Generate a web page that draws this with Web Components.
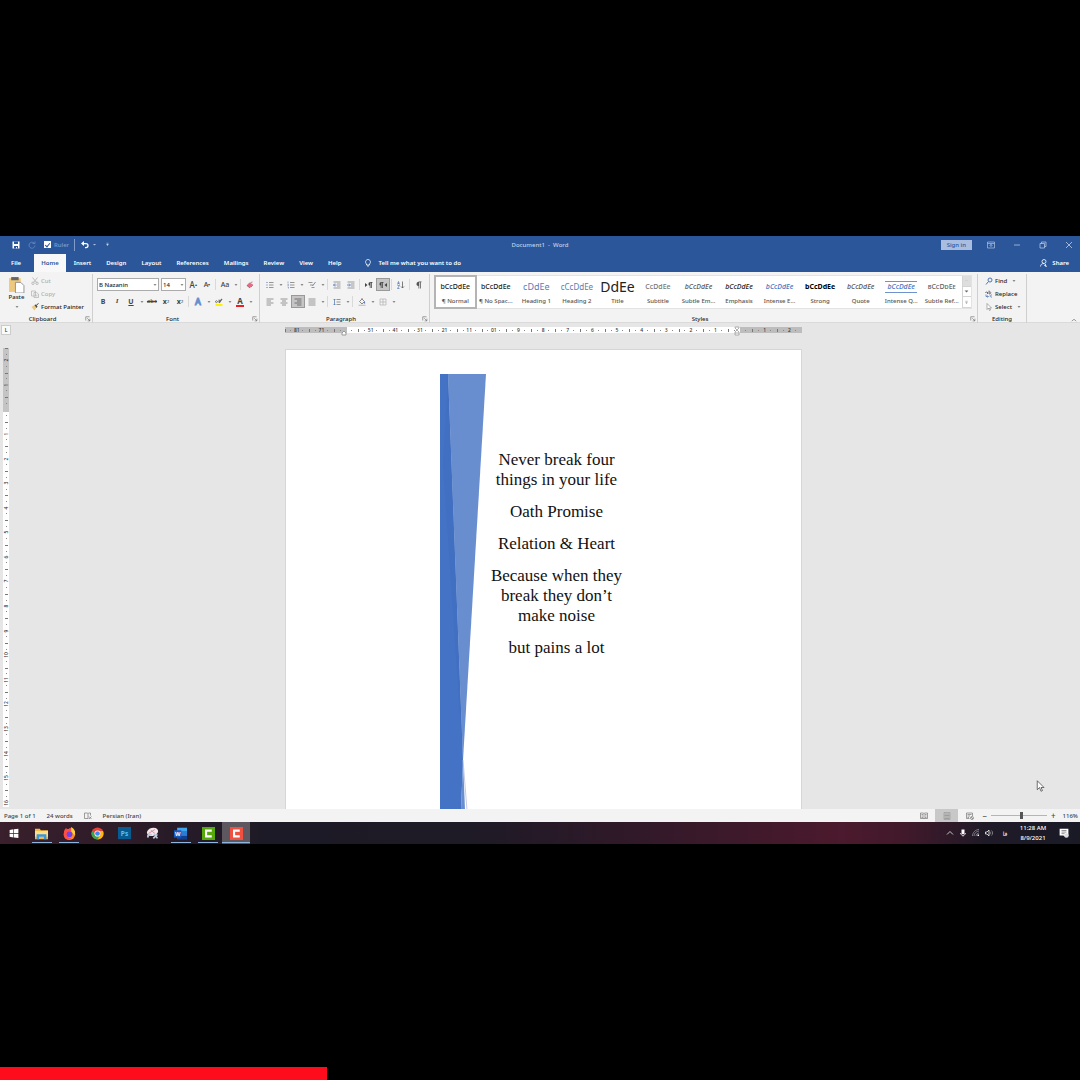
<!DOCTYPE html>
<html lang="en">
<head>
<meta charset="utf-8">
<title>Document1 - Word</title>
<style>
    body {
        margin: 0;
        background: #000;
        font-family: "Noto Sans", "Open Sans", sans-serif;
        font-size: 6px;
        font-weight: 500;
        color: #262626;
    }
</style>
</head>
<body>
<video-frame played="30.3">
    <word-window></word-window>
    <task-bar></task-bar>
</video-frame>

<script>
const base = `
    :host, * { box-sizing: border-box; }
    button, input, select {
        font: inherit;
        color: inherit;
        margin: 0;
        padding: 0;
        border: 0;
        background: none;
    }
    button { display: flex; align-items: center; white-space: nowrap; }
`;

const line = (d, color = '#555', width = 1) =>
    `<path d="${d}" fill="none" stroke="${color}" stroke-width="${width}"/>`;
const fill = (d, color) => `<path d="${d}" fill="${color}"/>`;

// Every icon is drawn on a 16 x 16 grid
const icons = {
    arrow: fill('M2 5h12l-6 6z', '#666'),
    arrowLight: fill('M3 6h10l-5 5z', '#a9bfe3'),
    save: fill('M1 1h14v14H1z', '#fff') + fill('M4 1h8v5H4zM4 10h8v5h-2v-3H8v3H4z', '#2b579a'),
    redo: line('M12 4a6 6 0 1 0 2 5M9 5h5V1', '#6c8dc3', 1.5),
    undo: line('M3 5h7a4 4 0 0 1 0 8H8', '#fff', 2.5) + fill('M0 5l6-5v10z', '#fff'),
    customise: line('M5 4h6', '#fff', 1.5) + fill('M4 7h8l-4 5z', '#fff'),
    display: line('M1 2h14v12H1zM1 5h14M8 12V7M5 9l3-2 3 2', '#b9cae6', 1.3),
    minimise: line('M2 8h12', '#b9cae6', 1.5),
    restore: line('M2 5h9v9H2zM5 5V2h9v9h-3', '#b9cae6', 1.5),
    close: line('M2 2l12 12M14 2L2 14', '#c9d6ec', 1.5),
    person: line('M8 1a4 4 0 0 1 0 8a4 4 0 0 1 0-8M1 15c0-4 3-6 7-6M11 10v5M8 12l6 3', '#fff', 1.6),
    bulb: line('M5 10C1 6 4 1 8 1s7 5 3 9v2H5zM6 14h4', '#fff', 1.6),
    paste: fill('M1 2h11v13H1z', '#edc87e') + fill('M3 1h7v3H3z', '#666') +
        '<path d="M7 6h5l3 3v7H7z" fill="#fff" stroke="#888" stroke-width=".8"/>',
    cut: line('M3 1l8 10M13 1L5 11M4 10a2 2 0 1 1 0 5a2 2 0 1 1 0-5M12 10a2 2 0 1 1 0 5a2 2 0 1 1 0-5', '#b4b4b4', 1.7),
    copy: '<path d="M1 2h8v10H1zM6 5h5l4 3v7H6z" fill="#f3f3f3" stroke="#b4b4b4" stroke-width="1.5"/>' + line('M8 10h5M8 12h5', '#b4b4b4'),
    painter: fill('M1 8l6-4 4 5-4 6z', '#edc87e') + fill('M7 4l3-1 3 4-2 3z', '#444') + line('M11 4l4-3', '#444', 2),
    highlight: fill('M1 12h14v4H1z', '#fff200') + line('M1 8c0-4 4-3 4 0c-1 2-4 1-4 0M8 3v6c3 1 4-3 0-4', '#444', 1.3) + line('M8 9l6-7', '#666', 2.5),
    eraser: fill('M1 9l6-6 7 4-6 7z', '#e36c83') + line('M2 9l6 5M9 3l4-1M10 12l4-4', '#9a5068', 1.4),
    bullets: fill('M1 2h2v2H1zM1 7h2v2H1zM1 12h2v2H1z', '#4d73b5') + line('M6 3h9M6 8h9M6 13h9', '#777', 1.5),
    numbering: line('M2 1v4M1 7h2v2H1M1 12h2v3', '#4d73b5') + line('M6 3h9M6 8h9M6 13h9', '#777', 1.5),
    multilevel: line('M1 3h8M4 8h6M7 13h6', '#777', 1.5) + line('M9 10l6-8', '#4d73b5', 1.6),
    outdent: line('M1 2h14M8 6h7M8 10h7M1 14h14', '#777', 1.4) + line('M7 8H1M4 5L1 8l3 3', '#4d73b5', 1.6),
    indent: line('M1 2h14M8 6h7M8 10h7M1 14h14', '#777', 1.4) + line('M0 8h6M4 5l3 3-3 3', '#4d73b5', 1.6),
    ltr: fill('M0 4l5 4-5 4z', '#444') + fill('M7 6c0-4 3-4 8-4v1.500h-1V14h-1.500V3.500H11V14H9.500V9C8 9 7 8 7 6z', '#444'),
    rtl: fill('M16 4l-5 4 5 4z', '#444') + fill('M1 6c0-4 3-4 8-4v1.500H8V14H6.500V3.500H5V14H3.500V9C2 9 1 8 1 6z', '#444'),
    sort: line('M1 7l2-6 2 6M2 5h2M1 9h4l-4 6h4', '#4d73b5', 1.4) + line('M11 1v13M8 11l3 3 3-3', '#555', 1.5),
    pilcrow: fill('M3 6c0-4 3-5 10-5v1.500h-1.500V15H10V2.500H8.500V15H7V10C4 10 3 8 3 6z', '#555'),
    left: line('M1 2h14M1 6h9M1 10h14M1 14h9', '#777', 1.5),
    center: line('M1 2h14M4 6h8M1 10h14M4 14h8', '#777', 1.5),
    right: line('M1 2h14M6 6h9M1 10h14M6 14h9', '#555', 1.5),
    justify: line('M1 2h14M1 6h14M1 10h14M1 14h14', '#777', 1.5),
    spacing: line('M3 2v12M1 4l2-2 2 2M1 12l2 2 2-2', '#4d73b5', 1.4) + line('M7 3h8M7 8h8M7 13h8', '#777', 1.5),
    shading: line('M3 7l5-5 5 5-5 5zM8 2V0', '#666', 1.5) + fill('M13 7c2 3 2 4 0 4s-2-1 0-4z', '#4d73b5') + line('M1 14.500h14', '#bbb', 2),
    borders: line('M2 2h12v12H2zM8 2v12M2 8h12', '#aaa', 1.2),
    find: line('M10 2a4 4 0 1 1 0 8a4 4 0 1 1 0-8M7 9l-5 6', '#4d73b5', 2),
    replace: line('M1 6a2 2 0 1 1 4 0v1M5 4v4M8 1v7M8 4c5-1 5 4 0 4', '#555', 1.5) + line('M2 9v4h4M5 11l2 2-2 2M14 10c-5-1-5 5 0 4', '#4d73b5', 1.6),
    select: '<path d="M4 1v12l3-3 2 5 2-1-2-4h4z" fill="#fff" stroke="#666"/>',
    launcher: line('M2 12V2h10M6 6l7 7M13 7v6H7', '#666', 1.6),
    collapse: line('M2 11l6-5 6 5', '#555', 1.5),
    lineUp: line('M4 10l4-4 4 4', '#bbb', 1.5),
    more: line('M4 4h8', '#777', 1.5) + fill('M4 8h8l-4 4z', '#777'),
    book: line('M1 2h6l1 1 1-1h4v5M1 2v11h6l1 1V3M10 9l5 5M15 9l-5 5', '#777', 1.4),
    read: line('M1 2h6l1 1 1-1h6v11H9l-1 1-1-1H1zM8 3v11M3 5h3M3 8h3M3 11h3M10 5h3M10 8h3M10 11h3', '#777', 1.4),
    print: '<path d="M2 1h12v14H2z" fill="#ccc" stroke="#888"/>' + line('M3 4h10M3 7h10M3 10h10M3 13h10', '#888', 1.4),
    web: line('M1 2h12v6M1 2v11h6M3 5h8M3 8h5M3 11h3', '#777', 1.4) + line('M12 9a3 3 0 1 1 0 6a3 3 0 1 1 0-6M10 10l4 4', '#777', 1.4),
    pointer: '<path d="M3 1v12l3-3 2 5 2-1-2-4h4z" fill="#fff" stroke="#444" stroke-width="1"/>',
    windows: fill('M1 3l6-1v6H1zM8 2l7-1v7H8zM1 9h6v6l-6-1zM8 9h7v7l-7-1z', '#fff'),
    explorer: fill('M0 2h6l1 2h9v11H0z', '#f3bb45') + fill('M0 5h16v7H0z', '#ffe08a') + fill('M2 9h12v6h-3v-3H5v3H2z', '#3a96dd'),
    firefox: '<circle cx="8" cy="9" r="7" fill="#ff8a1e"/>' + fill('M1 8c0-3 1-5 3-7l1 3 4-3c1 2 5 3 6 7-3-4-7-3-9 0s1 7 5 5c-5 6-11 1-10-5z', '#ff4f42') +
        fill('M10 0c4 2 6 6 4 10l-4-5z', '#ffd23c') + '<circle cx="8" cy="9" r="3.500" fill="#7542e5"/>',
    chrome: '<circle cx="8" cy="8" r="7.500" fill="#ea4335"/>' + fill('M1.500 4.500A7.500 7.500 0 0 0 8 15.500l3-6H5z', '#34a853') +
        fill('M14.800 5A7.500 7.500 0 0 1 8 15.500l4-7-1-3.500z', '#fbbc05') + '<circle cx="8" cy="8" r="3.800" fill="#fff"/><circle cx="8" cy="8" r="2.900" fill="#4285f4"/>',
    photoshop: '<path d="M0 0h16v15H0z" fill="#075b91"/><text x="8" y="11" text-anchor="middle" font-size="8" font-weight="700" fill="#55c2f5">Ps</text>',
    snip: '<ellipse cx="8" cy="6" rx="7" ry="5" transform="rotate(-15 8 6)" fill="#f1e6ea"/>' + line('M3 8l8-5M6 4l5 4', '#e08d9f', 1.2) + line('M3 13c-2-3 1-5 4-3M10 8l4 6M14 9l-5 5', '#c4cde0', 2),
    word: fill('M4 1h12v14H4z', '#2b7cd3') + fill('M4 1h12v4H4z', '#41a5ee') + fill('M4 11h12v4H4z', '#103f91') + fill('M0 4h9v9H0z', '#185abd') +
        '<text x="4.500" y="11" text-anchor="middle" font-size="7" font-weight="700" fill="#fff">W</text>',
    camtasiaGreen: fill('M0 0h16v16H0z', '#57a80c') + line('M12 4.500H5v7h7', '#fff', 2.600),
    camtasiaRed: fill('M0 0h16v16H0z', '#f0503f') + line('M12 4.500H5v7h7', '#fff', 2.600),
    chevronUp: line('M2 11l6-6 6 6', '#eee', 1.6),
    mic: fill('M5 1h6v9H5z', '#fff') + line('M3 8c0 6 10 6 10 0M8 12v3', '#fff', 1.5),
    wifi: line('M1 14C1 7 7 1 14 1M4 14c0-5 5-10 10-10M8 14c0-3 3-6 6-6', '#9b98a3', 1.500) + fill('M11 11h3v3h-3z', '#fff'),
    sound: '<path d="M1 6h3l4-4v12l-4-4H1z" fill="none" stroke="#fff" stroke-width="1.500"/>' + line('M10 5c2 2 2 4 0 6M13 3c3 3 3 7 0 10', '#aaa', 1.3),
    notice: fill('M1 1h14v11h-4v3l-4-3H1z', '#fff') + line('M4 4h8M4 6.500h8M4 9h5', '#555') + '<circle cx="12" cy="12" r="3.500" fill="#ddd"/>'
};

class UiIcon extends HTMLElement {
    constructor() {
        super();
        this.attachShadow({ mode: 'open' });
    }

    connectedCallback() {
        this.shadowRoot.innerHTML = `
            <style>
                :host { display: block; flex: none; width: var(--icon, 8px); height: var(--icon, 8px); }
                svg { display: block; width: 100%; height: 100%; }
            </style>
            <svg viewBox="0 0 16 16" aria-hidden="true">${icons[this.getAttribute('name')]}</svg>
        `;
    }
}
customElements.define('ui-icon', UiIcon);

class VideoFrame extends HTMLElement {
    constructor() {
        super();
        this.attachShadow({ mode: 'open' });
        this.shadowRoot.innerHTML = `
            <style>
                ${base}
                :host { display: grid; grid-template-rows: 1fr auto 1fr; min-height: 100vh; }
                .screen { grid-row: 2; aspect-ratio: 135 / 76; display: flex; flex-direction: column; overflow: hidden; }
                .progress { grid-row: 3; align-self: end; height: 13px; background: #ff0c1c; }
            </style>
            <div class="screen"><slot></slot></div>
            <div class="progress"></div>
        `;
    }

    connectedCallback() {
        this.shadowRoot.querySelector('.progress').style.width = `${this.getAttribute('played')}%`;
    }
}
customElements.define('video-frame', VideoFrame);

class TitleBar extends HTMLElement {
    constructor() {
        super();
        this.attachShadow({ mode: 'open' });
        this.shadowRoot.innerHTML = `
            <style>
                ${base}
                :host {
                    display: grid;
                    grid-template-columns: 1fr auto 1fr;
                    align-items: center;
                    height: 17px;
                    background: #2b579a;
                    color: #c3d1e9;
                }
                .quick, .window { display: flex; align-items: center; }
                .quick { padding-left: 12px; gap: 8px; }
                .window { justify-content: flex-end; padding-right: 7px; gap: 18px; }
                label { display: flex; align-items: center; gap: 3px; color: #7f9ccc; }
                input {
                    appearance: none;
                    width: 7px;
                    height: 7px;
                    background: #fff;
                    display: grid;
                    place-items: center;
                }
                input:checked::after {
                    content: "";
                    width: 2px;
                    height: 4px;
                    border: solid #2b579a;
                    border-width: 0 1px 1px 0;
                    transform: rotate(40deg);
                }
                .undo { border-left: 1px solid #7f9ccc; padding-left: 6px; height: 12px; gap: 3px; margin-left: -3px; }
                .arrow { --icon: 5px; }
                .sign { height: 10px; padding: 0 6px; margin-right: -3px; background: #a8bde0; color: #2b579a; }
            </style>
            <div class="quick">
                <button aria-label="Save"><ui-icon name="save"></ui-icon></button>
                <button aria-label="Redo"><ui-icon name="redo"></ui-icon></button>
                <label><input type="checkbox" checked>Ruler</label>
                <button class="undo" aria-label="Undo"><ui-icon name="undo"></ui-icon><ui-icon class="arrow" name="arrowLight"></ui-icon></button>
                <button class="arrow" aria-label="Customize"><ui-icon name="customise"></ui-icon></button>
            </div>
            <span>Document1&nbsp; - &nbsp;Word</span>
            <div class="window">
                <button class="sign">Sign in</button>
                <button aria-label="Ribbon display"><ui-icon name="display"></ui-icon></button>
                <button aria-label="Minimize"><ui-icon name="minimise"></ui-icon></button>
                <button aria-label="Restore"><ui-icon name="restore"></ui-icon></button>
                <button aria-label="Close"><ui-icon name="close"></ui-icon></button>
            </div>
        `;
    }
}
customElements.define('title-bar', TitleBar);

class RibbonTabs extends HTMLElement {
    constructor() {
        super();
        this.attachShadow({ mode: 'open' });
        const tabs = ['File', 'Home', 'Insert', 'Design', 'Layout', 'References', 'Mailings', 'Review', 'View', 'Help'];
        this.shadowRoot.innerHTML = `
            <style>
                ${base}
                :host { display: flex; align-items: flex-end; height: 19px; background: #2b579a; color: #fff; padding: 0 11px 0 4px; font-weight: 600; }
                nav { display: flex; gap: 1px; }
                button { height: 18px; padding: 0 7px; }
                button:first-child { margin-right: 5px; }
                .active { background: #f8f8f8; color: #2b579a; }
                .tell { gap: 7px; margin-left: 8px; }
                .share { gap: 4px; margin-left: auto; padding: 0; }
            </style>
            <nav>${tabs.map(t => `<button class="${t === 'Home' ? 'active' : ''}">${t}</button>`).join('')}</nav>
            <button class="tell"><ui-icon name="bulb"></ui-icon>Tell me what you want to do</button>
            <button class="share"><ui-icon name="person"></ui-icon>Share</button>
        `;
    }
}
customElements.define('ribbon-tabs', RibbonTabs);

class RibbonGroup extends HTMLElement {
    constructor() {
        super();
        this.attachShadow({ mode: 'open' });
    }

    connectedCallback() {
        const launcher = this.hasAttribute('launcher')
            ? '<button aria-label="More options"><ui-icon name="launcher"></ui-icon></button>' : '';
        this.shadowRoot.innerHTML = `
            <style>
                ${base}
                :host { display: flex; flex-direction: column; border-right: 1px solid #cfcfcf; }
                .body { height: 40px; }
                footer { display: flex; align-items: center; height: 9px; }
                footer span { flex: 1; text-align: center; }
                footer button { width: 7px; --icon: 6px; }
            </style>
            <div class="body"><slot></slot></div>
            <footer><span>${this.getAttribute('label')}</span>${launcher}</footer>
        `;
    }
}
customElements.define('ribbon-group', RibbonGroup);

class ToolButton extends HTMLElement {
    constructor() {
        super();
        this.attachShadow({ mode: 'open' });
    }

    connectedCallback() {
        const icon = this.getAttribute('icon');
        this.shadowRoot.innerHTML = `
            <style>
                ${base}
                :host { display: flex; align-items: center; color: #444; }
                button { justify-content: center; width: 14px; height: 13px; }
                :host([pressed]) button { background: #c5c5c5; outline: 1px solid #999; outline-offset: -1px; }
                .menu { display: flex; justify-content: center; width: 7px; --icon: 4px; }
            </style>
            <button aria-label="${this.getAttribute('label')}">${icon ? `<ui-icon name="${icon}"></ui-icon>` : '<slot></slot>'}</button>
            ${this.hasAttribute('menu') ? '<span class="menu"><ui-icon name="arrow"></ui-icon></span>' : ''}
        `;
    }
}
customElements.define('tool-button', ToolButton);

class ComboBox extends HTMLElement {
    constructor() {
        super();
        this.attachShadow({ mode: 'open' });
    }

    connectedCallback() {
        this.shadowRoot.innerHTML = `
            <style>
                ${base}
                :host { display: grid; align-items: center; height: 13px; background: #fff; border: 1px solid #ababab; --icon: 4px; }
                select { grid-area: 1 / 1; appearance: none; width: 100%; height: 11px; padding-left: 1px; }
                ui-icon { grid-area: 1 / 1; justify-self: end; margin-right: 1px; pointer-events: none; }
            </style>
            <select aria-label="${this.getAttribute('label')}"><option>${this.getAttribute('value')}</option></select>
            <ui-icon name="arrow"></ui-icon>
        `;
    }
}
customElements.define('combo-box', ComboBox);

class StyleCard extends HTMLElement {
    constructor() {
        super();
        this.attachShadow({ mode: 'open' });
    }

    connectedCallback() {
        this.shadowRoot.innerHTML = `
            <style>
                ${base}
                :host { display: block; min-width: 0; }
                button { display: grid; grid-template-rows: 18px 11px; width: 100%; height: 32px; padding: 2px 0 1px; text-align: center; }
                :host([selected]) button { outline: 2px solid #b4b4b4; outline-offset: -1px; }
                .sample { display: flex; align-items: center; justify-content: center; font-size: 7px; line-height: 10px; color: #222; }
                .name { color: #555; line-height: 11px; }
                .heading { font-size: 9px; color: #5b7bb4; font-weight: 400; }
                .heading2 { font-size: 8px; color: #5b7bb4; font-weight: 400; }
                .title { font-size: 14px; line-height: 18px; font-weight: 400; }
                .subtitle { color: #777; }
                .subtle { font-style: italic; color: #555; }
                .emphasis { font-style: italic; }
                .intense { font-style: italic; color: #4472c4; }
                .strong { font-weight: 700; color: #000; }
                .quote span { border: solid #6f91cf; border-width: 1px 0; padding: 0 2px; }
                .caps { font-variant: small-caps; color: #666; }
            </style>
            <button>
                <div class="sample ${this.getAttribute('look') || ''}"><span>${this.getAttribute('sample') || 'bCcDdEe'}</span></div>
                <div class="name"><slot></slot></div>
            </button>
        `;
    }
}
customElements.define('style-card', StyleCard);

class WordRibbon extends HTMLElement {
    constructor() {
        super();
        this.attachShadow({ mode: 'open' });
        this.shadowRoot.innerHTML = `
            <style>
                ${base}
                :host { display: flex; height: 51px; padding-top: 2px; background: #f3f3f3; box-shadow: inset 0 -1px #dadada; }
                .clipboard { width: 93px; }
                .font { width: 167px; }
                .paragraph { width: 170px; }
                .styles { flex: 1; min-width: 0; }
                .editing { width: 49px; }
                .rest { display: flex; align-items: flex-end; justify-content: flex-end; width: 53px; padding: 0 3px 0; --icon: 6px; }

                .paste-area { display: flex; }
                .paste { flex-direction: column; width: 31px; height: 39px; padding: 2px 0 0 2px; line-height: 9px; --icon: 17px; }
                .paste ui-icon:last-child { --icon: 4px; margin-top: 3px; }
                .list button { height: 13px; gap: 2px; }
                .list .off { color: #b0b0b0; }
                .finds { padding-left: 7px; }
                .finds .arrow { --icon: 4px; margin-left: 3px; }

                .tools { display: grid; grid-template-rows: 13px 13px; gap: 4px; padding: 4px 0 0 3px; }
                .row { display: flex; }
                .name { width: 62px; margin: 0 2px 0 1px; }
                .size { width: 25px; }
                hr { width: 0; height: 11px; margin: 1px 2px 1px 1px; border: 0; border-left: 1px solid #d9d9d9; }
                sup, sub { font-size: 4px; line-height: 4px; }
                b, i, u, s { font-size: 7px; line-height: 9px; font-weight: 700; }
                i { font-family: "Liberation Serif", serif; }
                s { font-size: 6px; font-weight: 500; }
                .grow { font-size: 8px; }
                .shrink { font-size: 7px; }
                .case { font-size: 7px; }
                .glow { color: #fff; -webkit-text-stroke: 1px #6a8fce; font-size: 9px; }
                .red { font-size: 8px; line-height: 8px; font-weight: 700; border-bottom: 2px solid #ee1c25; padding: 0 1px; }

                .gallery { display: grid; grid-template-columns: repeat(13, minmax(0, 1fr)) 9px; margin: 1px 5px 0 4px; height: 34px; background: #fff; border: 1px solid #e3e3e3; }
                .scroll { display: grid; grid-template-rows: repeat(3, 1fr); border-left: 1px solid #d4d4d4; --icon: 5px; }
                .scroll button { justify-content: center; border-bottom: 1px solid #d4d4d4; }
                .scroll button:first-child { background: #dedede; }
            </style>
            <ribbon-group class="clipboard" label="Clipboard" launcher>
                <div class="paste-area">
                    <button class="paste"><ui-icon name="paste"></ui-icon>Paste<ui-icon name="arrow"></ui-icon></button>
                    <div class="list">
                        <button class="off"><ui-icon name="cut"></ui-icon>Cut</button>
                        <button class="off"><ui-icon name="copy"></ui-icon>Copy</button>
                        <button><ui-icon name="painter"></ui-icon>Format Painter</button>
                    </div>
                </div>
            </ribbon-group>
            <ribbon-group class="font" label="Font" launcher>
                <div class="tools">
                    <div class="row">
                        <combo-box class="name" label="Font" value="B Nazanin"></combo-box>
                        <combo-box class="size" label="Font size" value="14"></combo-box>
                        <tool-button label="Grow font"><span class="grow">A</span><sup>▴</sup></tool-button>
                        <tool-button label="Shrink font"><span class="shrink">A</span><sup>▾</sup></tool-button>
                        <hr>
                        <tool-button label="Change case" menu><span class="case">Aa</span></tool-button>
                        <hr>
                        <tool-button label="Clear formatting" icon="eraser"></tool-button>
                    </div>
                    <div class="row">
                        <tool-button label="Bold"><b>B</b></tool-button>
                        <tool-button label="Italic"><i>I</i></tool-button>
                        <tool-button label="Underline" menu><u>U</u></tool-button>
                        <tool-button label="Strikethrough"><s>abc</s></tool-button>
                        <tool-button label="Subscript"><b>x</b><sub>2</sub></tool-button>
                        <tool-button label="Superscript"><b>x</b><sup>2</sup></tool-button>
                        <hr>
                        <tool-button label="Text effects" menu><span class="glow">A</span></tool-button>
                        <tool-button label="Highlight" icon="highlight" menu></tool-button>
                        <tool-button label="Font color" menu><span class="red">A</span></tool-button>
                    </div>
                </div>
            </ribbon-group>
            <ribbon-group class="paragraph" label="Paragraph" launcher>
                <div class="tools">
                    <div class="row">
                        <tool-button label="Bullets" icon="bullets" menu></tool-button>
                        <tool-button label="Numbering" icon="numbering" menu></tool-button>
                        <tool-button label="Multilevel list" icon="multilevel" menu></tool-button>
                        <hr>
                        <tool-button label="Decrease indent" icon="outdent"></tool-button>
                        <tool-button label="Increase indent" icon="indent"></tool-button>
                        <hr>
                        <tool-button label="Left to right" icon="ltr"></tool-button>
                        <tool-button label="Right to left" icon="rtl" pressed></tool-button>
                        <hr>
                        <tool-button label="Sort" icon="sort"></tool-button>
                        <hr>
                        <tool-button label="Show marks" icon="pilcrow"></tool-button>
                    </div>
                    <div class="row">
                        <tool-button label="Align left" icon="left"></tool-button>
                        <tool-button label="Center" icon="center"></tool-button>
                        <tool-button label="Align right" icon="right" pressed></tool-button>
                        <tool-button label="Justify" icon="justify" menu></tool-button>
                        <hr>
                        <tool-button label="Line spacing" icon="spacing" menu></tool-button>
                        <hr>
                        <tool-button label="Shading" icon="shading" menu></tool-button>
                        <tool-button label="Borders" icon="borders" menu></tool-button>
                    </div>
                </div>
            </ribbon-group>
            <ribbon-group class="styles" label="Styles" launcher>
                <div class="gallery">
                    <style-card selected>¶ Normal</style-card>
                    <style-card>¶ No Spac...</style-card>
                    <style-card look="heading" sample="cDdEe">Heading 1</style-card>
                    <style-card look="heading2" sample="cCcDdEe">Heading 2</style-card>
                    <style-card look="title" sample="DdEe">Title</style-card>
                    <style-card look="subtitle" sample="CcDdEe">Subtitle</style-card>
                    <style-card look="subtle">Subtle Em...</style-card>
                    <style-card look="emphasis">Emphasis</style-card>
                    <style-card look="intense">Intense E...</style-card>
                    <style-card look="strong">Strong</style-card>
                    <style-card look="subtle">Quote</style-card>
                    <style-card look="intense quote">Intense Q...</style-card>
                    <style-card look="caps" sample="bCcDdEe">Subtle Ref...</style-card>
                    <div class="scroll">
                        <button aria-label="Previous row"><ui-icon name="lineUp"></ui-icon></button>
                        <button aria-label="Next row"><ui-icon name="arrow"></ui-icon></button>
                        <button aria-label="More styles"><ui-icon name="more"></ui-icon></button>
                    </div>
                </div>
            </ribbon-group>
            <ribbon-group class="editing" label="Editing">
                <div class="list finds">
                    <button><ui-icon name="find"></ui-icon>Find<ui-icon class="arrow" name="arrow"></ui-icon></button>
                    <button><ui-icon name="replace"></ui-icon>Replace</button>
                    <button><ui-icon name="select"></ui-icon>Select<ui-icon class="arrow" name="arrow"></ui-icon></button>
                </div>
            </ribbon-group>
            <div class="rest"><button aria-label="Collapse ribbon"><ui-icon name="collapse"></ui-icon></button></div>
        `;
    }
}
customElements.define('word-ribbon', WordRibbon);

class PageRuler extends HTMLElement {
    constructor() {
        super();
        this.attachShadow({ mode: 'open' });
    }

    connectedCallback() {
        const cells = this.getAttribute('labels').split(',').map(n => `<span><em>${n}</em></span>`).join('');
        this.shadowRoot.innerHTML = `
            <style>
                ${base}
                :host { display: block; overflow: hidden; font-size: 5px; line-height: 6px; color: #333; }
                div { display: flex; height: 6px; background: linear-gradient(90deg, #bdbdbd 12%, #fff 12% 88%, #bdbdbd 88%); }
                span {
                    flex: 1;
                    display: flex;
                    align-items: center;
                    justify-content: center;
                    background:
                        linear-gradient(#777, #777) 0 50% / 1px 3px no-repeat,
                        linear-gradient(#888, #888) 25% 50% / 1px 1px no-repeat,
                        linear-gradient(#888, #888) 75% 50% / 1px 1px no-repeat;
                }
                em { font-style: normal; }
                :host([vertical]) div { flex-direction: column; width: 6px; height: 467px; background: linear-gradient(#c4c4c4 64px, #fff 64px); }
                :host([vertical]) span {
                    background:
                        linear-gradient(#777, #777) 50% 0 / 3px 1px no-repeat,
                        linear-gradient(#888, #888) 50% 25% / 1px 1px no-repeat,
                        linear-gradient(#888, #888) 50% 75% / 1px 1px no-repeat;
                }
                :host([vertical]) em { transform: rotate(-90deg); }
            </style>
            <div>${cells}</div>
        `;
    }
}
customElements.define('page-ruler', PageRuler);

class DocumentPage extends HTMLElement {
    constructor() {
        super();
        this.attachShadow({ mode: 'open' });
        this.shadowRoot.innerHTML = `
            <style>
                ${base}
                :host {
                    display: flex;
                    align-items: flex-start;
                    background: #fff;
                    border: solid #d6d6d6;
                    border-width: 1px 1px 0;
                    padding: 24px 0 0 154px;
                    overflow: hidden;
                }
                svg { flex: none; width: 46px; height: 436px; }
                article {
                    width: 140px;
                    margin: 76px 0 0 1px;
                    font: 17px/20px "Liberation Serif", serif;
                    color: #111;
                    text-align: center;
                }
                ::slotted(p) { margin: 0 0 12px; }
            </style>
            <svg viewBox="0 0 46 436" aria-hidden="true">
                <path d="M8 0H46L23 386z" fill="#698ed0"/>
                <path d="M23 386L25 436H21z" fill="#698ed0"/>
                <path d="M0 0H8L23 386L21 436H0z" fill="#4472c4"/>
                <path d="M3 90L23 386L8 0z" fill="#3e6bbd" opacity=".5"/>
                <path d="M23 386L27 436" fill="none" stroke="#b9bfdb" stroke-width=".8"/>
            </svg>
            <article><slot></slot></article>
        `;
    }
}
customElements.define('document-page', DocumentPage);

class WorkSpace extends HTMLElement {
    constructor() {
        super();
        this.attachShadow({ mode: 'open' });
        this.shadowRoot.innerHTML = `
            <style>
                ${base}
                :host {
                    position: relative;
                    display: grid;
                    grid-template: 13px minmax(0, 1fr) / 12px minmax(0, 1fr) 6px;
                    background: #e6e6e6;
                    overflow: hidden;
                }
                .corner { margin: 2px 1px 1px; background: #fafafa; border: 1px solid #ccc; font-size: 5px; line-height: 8px; justify-content: center; }
                .across { position: relative; justify-self: center; width: 517px; max-width: 100%; padding-top: 4px; }
                .across svg { position: absolute; top: 3px; width: 6px; height: 10px; }
                .first { left: 11%; }
                .last { left: 87%; }
                .down { grid-row: 2; margin: 12px 0 2px 3px; }
                document-page { grid-area: 2 / 2; justify-self: center; width: 517px; max-width: 100%; margin-top: 13px; }
                .pointer { position: absolute; right: 33px; bottom: 17px; --icon: 12px; }
            </style>
            <button class="corner" aria-label="Tab stop">L</button>
            <div class="across">
                <page-ruler labels="81,71,,51,41,31,21,11,01,9,8,7,6,5,4,3,2,1,,1,2"></page-ruler>
                <svg class="first" viewBox="0 0 6 10"><path d="M1 9V7l2-2 2 2v2z" fill="#fff" stroke="#999"/></svg>
                <svg class="last" viewBox="0 0 6 10"><path d="M1 1h4v1L3 4 1 2zM1 9V6l2-2 2 2v3zM1 7h4" fill="#fff" stroke="#999" stroke-width=".8"/></svg>
            </div>
            <page-ruler class="down" vertical labels="2,1,,1,2,3,4,5,6,7,8,9,10,11,12,13,14,15,16"></page-ruler>
            <document-page>
                <p>Never break four things in your life</p>
                <p>Oath Promise</p>
                <p>Relation &amp; Heart</p>
                <p>Because when they break they don’t make noise</p>
                <p>but pains a lot</p>
            </document-page>
            <ui-icon class="pointer" name="pointer"></ui-icon>
        `;
    }
}
customElements.define('work-space', WorkSpace);

class StatusBar extends HTMLElement {
    constructor() {
        super();
        this.attachShadow({ mode: 'open' });
        this.shadowRoot.innerHTML = `
            <style>
                ${base}
                :host { display: flex; align-items: center; height: 13px; padding: 0 2px 0 4px; background: #f3f3f3; color: #444; }
                .info { display: flex; align-items: center; gap: 11px; }
                .views { display: flex; align-items: center; margin-left: auto; }
                .views button { justify-content: center; width: 23px; height: 13px; }
                .views .on { background: #c8c8c8; }
                .zoom { display: flex; align-items: center; gap: 4px; margin-left: 1px; }
                .zoom button { font-size: 8px; line-height: 10px; }
                input { appearance: none; width: 56px; height: 7px; background: linear-gradient(#b5b5b5, #b5b5b5) 0 50% / 100% 1px no-repeat; }
                input::-webkit-slider-thumb { appearance: none; width: 3px; height: 7px; background: #555; }
                .percent { margin-left: 3px; }
            </style>
            <div class="info">
                <span>Page 1 of 1</span>
                <span>24 words</span>
                <ui-icon name="book"></ui-icon>
                <span>Persian (Iran)</span>
            </div>
            <div class="views">
                <button aria-label="Read mode"><ui-icon name="read"></ui-icon></button>
                <button class="on" aria-label="Print layout"><ui-icon name="print"></ui-icon></button>
                <button aria-label="Web layout"><ui-icon name="web"></ui-icon></button>
            </div>
            <div class="zoom">
                <button aria-label="Zoom out">−</button>
                <input type="range" min="0" max="100" value="54" aria-label="Zoom">
                <button aria-label="Zoom in">+</button>
                <span class="percent">116%</span>
            </div>
        `;
    }
}
customElements.define('status-bar', StatusBar);

class WordWindow extends HTMLElement {
    constructor() {
        super();
        this.attachShadow({ mode: 'open' });
        this.shadowRoot.innerHTML = `
            <style>
                :host { display: flex; flex-direction: column; flex: 1; min-height: 0; }
                work-space { flex: 1; min-height: 0; }
            </style>
            <title-bar></title-bar>
            <ribbon-tabs></ribbon-tabs>
            <word-ribbon></word-ribbon>
            <work-space></work-space>
            <status-bar></status-bar>
        `;
    }
}
customElements.define('word-window', WordWindow);

class TaskBar extends HTMLElement {
    constructor() {
        super();
        this.attachShadow({ mode: 'open' });
        const apps = [
            ['windows', 'Start', ''], ['explorer', 'File Explorer', 'open'], ['firefox', 'Firefox', 'open'],
            ['chrome', 'Chrome', ''], ['photoshop', 'Photoshop', ''], ['snip', 'Snipping Tool', ''],
            ['word', 'Word', 'open'], ['camtasiaGreen', 'Camtasia', 'open'], ['camtasiaRed', 'Recorder', 'open active']
        ];
        this.shadowRoot.innerHTML = `
            <style>
                ${base}
                :host {
                    display: flex;
                    justify-content: space-between;
                    height: 22px;
                    color: #fff;
                    background: linear-gradient(90deg, #3a1f2c, #2a1b28 14%, #1c1a26 25%, #1f1a26 45%, #35192a 62%, #4c192d 78%, #40192b 84%, #201a27 91%, #1a1a27);
                }
                .apps { display: grid; grid-template-columns: repeat(9, 1fr); width: 250px; --icon: 13px; }
                .apps button { justify-content: center; height: 22px; border: solid transparent; border-width: 1px 0; }
                .apps button:first-child { --icon: 10px; }
                .apps .open { background: linear-gradient(#8fb4dd, #8fb4dd) 50% 100% / 20px 1px no-repeat; }
                .apps .active { background: linear-gradient(#8fb4dd, #8fb4dd) 50% 100% / 100% 1px no-repeat, #5d5760; }
                .tray { display: flex; align-items: center; gap: 5px; padding-right: 11px; }
                .lang { width: 14px; text-align: center; font-family: "DejaVu Sans", sans-serif; }
                time { width: 32px; line-height: 10px; text-align: center; white-space: nowrap; }
                .notice { --icon: 10px; margin-left: 5px; }
            </style>
            <div class="apps">
                ${apps.map(([icon, name, state]) => `<button class="${state}" aria-label="${name}"><ui-icon name="${icon}"></ui-icon></button>`).join('')}
            </div>
            <div class="tray">
                <ui-icon name="chevronUp"></ui-icon>
                <ui-icon name="mic"></ui-icon>
                <ui-icon name="wifi"></ui-icon>
                <ui-icon name="sound"></ui-icon>
                <span class="lang">فا</span>
                <time>11:28 AM<br>8/9/2021</time>
                <ui-icon class="notice" name="notice"></ui-icon>
            </div>
        `;
    }
}
customElements.define('task-bar', TaskBar);
</script>
</body>
</html>
